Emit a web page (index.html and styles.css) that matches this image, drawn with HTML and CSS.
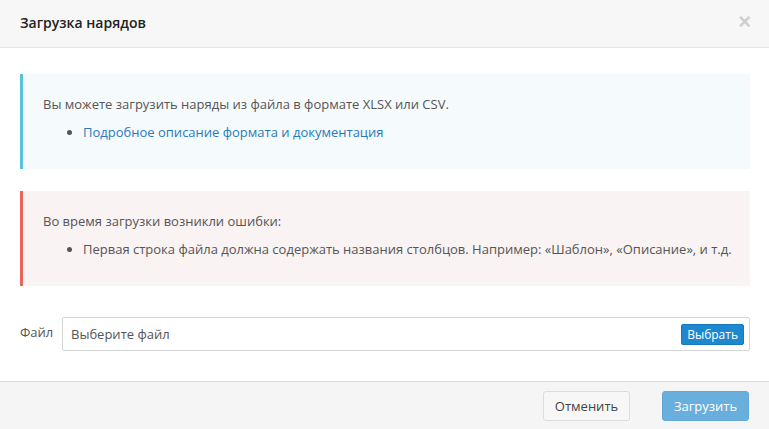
FILE: index.html
```html
<!DOCTYPE html>
<html lang="ru">
<head>
<meta charset="utf-8">
<title>Загрузка нарядов</title>
<link rel="stylesheet" href="styles.css">
</head>
<body>
<div class="modal">
  <div class="modal-header">
    <h4 class="modal-title">Загрузка нарядов</h4>
    <span class="close">&times;</span>
  </div>
  <div class="modal-body">
    <div class="alert alert-info">
      <p>Вы можете загрузить наряды из файла в формате XLSX или CSV.</p>
      <ul>
        <li><a href="#">Подробное описание формата и документация</a></li>
      </ul>
    </div>
    <div class="alert alert-danger">
      <p>Во время загрузки возникли ошибки:</p>
      <ul>
        <li>Первая строка файла должна содержать названия столбцов. Например: «Шаблон», «Описание», и т.д.</li>
      </ul>
    </div>
    <div class="file-row">
      <label class="file-label">Файл</label>
      <div class="file-input">
        <span class="file-placeholder">Выберите файл</span>
        <span class="btn-choose">Выбрать</span>
      </div>
    </div>
  </div>
  <div class="modal-footer">
    <button class="btn btn-default">Отменить</button>
    <button class="btn btn-primary">Загрузить</button>
  </div>
</div>
</body>
</html>
```
FILE: styles.css
```css
html, body {
  margin: 0;
  padding: 0;
  background: #fff;
}
body {
  font-family: "Open Sans", "Liberation Sans", sans-serif;
  font-size: 13px;
  color: #555;
}
.modal {
  width: 769px;
  height: 429px;
  display: flex;
  flex-direction: column;
}
.modal-header {
  height: 48px;
  box-sizing: border-box;
  background: #f7f7f7;
  border-bottom: 1px solid #e5e5e5;
  display: flex;
  align-items: center;
  justify-content: space-between;
  padding: 0 18px 0 20px;
}
.modal-title {
  margin: 0;
  font-size: 14px;
  font-weight: 600;
  color: #222;
  position: relative;
  top: -1px;
}
.close {
  font-size: 22px;
  font-weight: 700;
  color: #cfcfcf;
  line-height: 1;
  font-family: "Liberation Sans", sans-serif;
  position: relative;
  top: -2px;
}
.modal-body {
  flex: 1;
  padding: 26px 19px 0 20px;
  box-sizing: border-box;
}
.alert {
  border-left: 3px solid #5bc0de;
  background: #f5fafd;
  padding: 21px 5px 28px 20px;
  line-height: 18px;
  margin-bottom: 22px;
  white-space: nowrap;
}
.alert p {
  margin: 0 0 10px 0;
}
.alert ul {
  margin: 0;
  padding-left: 40px;
}
.alert-info {
  border-left-color: #5bc0de;
  background: #f5fafd;
}
.alert-danger {
  border-left-color: #e8675a;
  background: #f9f3f3;
}
.alert a {
  color: #2a7ab8;
  text-decoration: none;
}
.file-row {
  display: flex;
  align-items: center;
  margin-top: 31px;
}
.file-label {
  width: 42px;
  color: #555;
  position: relative;
  top: -2px;
}
.file-input {
  flex: 1;
  height: 34px;
  box-sizing: border-box;
  border: 1px solid #d6d6d6;
  border-radius: 2px;
  display: flex;
  align-items: center;
  justify-content: space-between;
  padding: 0 5px 0 8px;
}
.file-placeholder {
  color: #555;
}
.btn-choose {
  background: #1d88d0;
  color: #fff;
  font-size: 12px;
  height: 21px;
  line-height: 19px;
  padding: 0 5px;
  border-radius: 2px;
  border: 1px solid #1778bb;
  box-sizing: border-box;
}
.modal-footer {
  height: 48px;
  box-sizing: border-box;
  background: #f5f5f5;
  border-top: 1px solid #dcdcdc;
  display: flex;
  align-items: center;
  justify-content: flex-end;
  gap: 32px;
  padding: 0 20px 0 0;
}
.btn {
  font-family: "Open Sans", "Liberation Sans", sans-serif;
  font-size: 13px;
  width: 87px;
  height: 30px;
  border-radius: 3px;
  box-sizing: border-box;
  margin-top: 1px;
}
.btn-default {
  background: #f7f7f7;
  border: 1px solid #dcdcdc;
  color: #444;
}
.btn-primary {
  background: #68afdd;
  border: 1px solid #62a9d8;
  color: #fff;
}
```
